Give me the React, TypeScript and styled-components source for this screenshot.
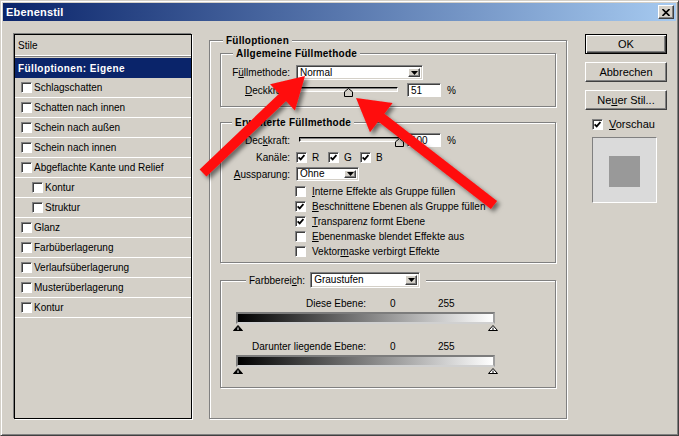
import React from 'react';
import styled, { createGlobalStyle, css } from 'styled-components';

const FACE = '#d4d0c8';

const GlobalStyle = createGlobalStyle`
  html, body {
    margin: 0;
    padding: 0;
    background: ${FACE};
  }
  body {
    font-family: 'Liberation Sans', Arial, sans-serif;
    font-size: 10px;
    color: #000;
  }
  * {
    box-sizing: border-box;
  }
`;

const Window = styled.div`
  position: relative;
  width: 679px;
  height: 436px;
  background: ${FACE};
  border: 1px solid;
  border-color: ${FACE} #404040 #404040 ${FACE};
  box-shadow: inset 1px 1px 0 #fff, inset -1px -1px 0 #808080;
  padding: 2px;
  display: flex;
  flex-direction: column;
  overflow: hidden;
`;

const TitleBar = styled.div`
  height: 18px;
  flex: none;
  background: linear-gradient(to right, #0a246a, #a6caf0);
  display: flex;
  align-items: center;
  justify-content: space-between;
  padding: 0 2px 0 3px;
  color: #fff;
  font-weight: bold;
  font-size: 11px;
  letter-spacing: 0.2px;
`;

const CloseButton = styled.span`
  width: 16px;
  height: 14px;
  background: ${FACE};
  border: 1px solid;
  border-color: #fff #404040 #404040 #fff;
  box-shadow: inset -1px -1px 0 #808080;
  display: flex;
  align-items: center;
  justify-content: center;
`;

const Body = styled.div`
  flex: 1;
  display: flex;
  gap: 17px;
  padding: 13px 0 14px 11px;
`;

/* ---------- left list ---------- */

const StylePanel = styled.div`
  width: 178px;
  flex: none;
  border: 1px solid #000;
  box-shadow: -1px -1px 0 #808080, 1px 1px 0 #fff;
  display: flex;
  flex-direction: column;
`;

const PanelHeader = styled.div`
  height: 21px;
  flex: none;
  display: flex;
  align-items: center;
  padding-left: 3px;
  border-bottom: 1px solid #fff;
  box-shadow: 0 1px 0 #808080;
  margin-bottom: 2px;
`;

const SelectedRow = styled.div`
  height: 20px;
  flex: none;
  display: flex;
  align-items: center;
  padding-left: 3px;
  background: #0a246a;
  color: #fff;
  font-weight: bold;
  letter-spacing: 0.4px;
`;

const StyleRow = styled.div<{ $indent?: boolean }>`
  height: 20px;
  flex: none;
  display: flex;
  align-items: center;
  gap: 2px;
  padding-left: ${({ $indent }) => ($indent ? 17 : 6)}px;
  border-bottom: 1px solid #fff;
`;

/* ---------- shared controls ---------- */

const Box = styled.span`
  width: 11px;
  height: 11px;
  flex: none;
  background: #fff;
  border: 1px solid;
  border-color: #808080 #fff #fff #808080;
  box-shadow: inset 1px 1px 0 #404040;
  display: inline-flex;
  align-items: center;
  justify-content: center;
`;

const Check = ({ checked }: { checked?: boolean }) => (
  <Box>
    {checked && (
      <svg width="7" height="7" viewBox="0 0 7 7">
        <path d="M0.6 3.3 L2.7 5.4 L6.4 1.1" stroke="#000" strokeWidth="1.7" fill="none" />
      </svg>
    )}
  </Box>
);

const SelectBox = styled.div<{ $w: number; $h?: number }>`
  width: ${({ $w }) => $w}px;
  height: ${({ $h }) => $h ?? 15}px;
  flex: none;
  background: #fff;
  border: 1px solid;
  border-color: #808080 #fff #fff #808080;
  box-shadow: inset 1px 1px 0 #404040, inset -1px -1px 0 ${FACE};
  display: flex;
  align-items: center;
  padding: 2px 2px 2px 3px;
  font-weight: normal;
  letter-spacing: 0;
`;

const SelectText = styled.span`
  flex: 1;
  line-height: 1;
`;

const DropButton = styled.span`
  width: 12px;
  height: 100%;
  background: ${FACE};
  border: 1px solid;
  border-color: #fff #404040 #404040 #fff;
  box-shadow: inset -1px -1px 0 #808080;
  display: flex;
  align-items: center;
  justify-content: center;
`;

const Select = ({ value, width, height }: { value: string; width: number; height?: number }) => (
  <SelectBox $w={width} $h={height}>
    <SelectText>{value}</SelectText>
    <DropButton>
      <svg width="7" height="4" viewBox="0 0 7 4">
        <polygon points="0,0 7,0 3.5,4" fill="#000" />
      </svg>
    </DropButton>
  </SelectBox>
);

const SliderWrap = styled.div<{ $w: number; $offset?: number }>`
  position: relative;
  width: ${({ $w }) => $w}px;
  height: 14px;
  margin-left: ${({ $offset }) => $offset ?? 0}px;
  flex: none;
`;

const Track = styled.div`
  margin-top: 4px;
  height: 5px;
  border: 1px solid;
  border-color: #000 #fff #fff #000;
  box-shadow: inset 1px 1px 0 #808080;
  background: #e6e3dd;
`;

const Thumb = styled.svg`
  position: absolute;
  top: 5px;
`;

const Slider = ({ width, value, offset }: { width: number; value: number; offset?: number }) => (
  <SliderWrap $w={width} $offset={offset}>
    <Track />
    <Thumb width="9" height="9" viewBox="0 0 9 9" style={{ left: (width - 2) * value - 3.5 }}>
      <polygon points="0.5,8.5 0.5,3.8 4.5,0.5 8.5,3.8 8.5,8.5" fill={FACE} stroke="#000" />
    </Thumb>
  </SliderWrap>
);

const NumberBox = styled.div`
  width: 34px;
  height: 14px;
  flex: none;
  margin-left: 9px;
  background: #fff;
  border: 1px solid;
  border-color: #808080 #fff #fff #808080;
  box-shadow: inset 1px 1px 0 #404040;
  padding-left: 3px;
  display: flex;
  align-items: center;
`;

const Unit = styled.span`
  margin-left: 6px;
`;

/* ---------- group boxes ---------- */

const etched = css`
  border: 1px solid #808080;
  box-shadow: 1px 1px 0 #fff, inset 1px 1px 0 #fff;
`;

const OuterGroup = styled.fieldset`
  ${etched};
  margin: 0;
  padding: 0 10px;
  width: 358px;
  flex: none;
  min-width: 0;
`;

const InnerGroup = styled.fieldset<{ $gap?: number; $pt: number; $pb: number }>`
  ${etched};
  margin: ${({ $gap }) => $gap ?? 0}px 0 0 0;
  padding: ${({ $pt }) => $pt}px 0 ${({ $pb }) => $pb}px 0;
  min-width: 0;
`;

const Legend = styled.legend<{ $left: number }>`
  margin-left: ${({ $left }) => $left}px;
  padding: 0 3px;
  background: ${FACE};
  font-weight: bold;
  line-height: 13px;
  letter-spacing: 0.25px;
`;

const RangeLegend = styled.legend`
  margin-left: 25px;
  padding: 0 6px 0 3px;
  background: ${FACE};
  display: flex;
  align-items: center;
  gap: 5px;
  height: 16px;
`;

const FieldRow = styled.div<{ $h?: number; $gap?: number }>`
  display: grid;
  grid-template-columns: 69px 1fr;
  column-gap: 6px;
  align-items: center;
  height: ${({ $h }) => $h ?? 14}px;
  margin-top: ${({ $gap }) => $gap ?? 0}px;
`;

const Label = styled.span`
  text-align: right;
  white-space: nowrap;
`;

const Controls = styled.div`
  display: flex;
  align-items: center;
`;

const Channel = styled.span`
  width: 32px;
  display: flex;
  align-items: center;
  gap: 5px;
`;

const CheckList = styled.div`
  margin-top: 3px;
  padding-left: 74px;
`;

const CheckRow = styled.div`
  height: 15px;
  display: flex;
  align-items: center;
  gap: 6px;
  white-space: nowrap;
`;

const RangeBlock = styled.div`
  padding-left: 15px;
`;

const RangeLabels = styled.div<{ $gap: number }>`
  display: grid;
  grid-template-columns: 154px 48px 1fr;
  height: 12px;
  align-items: center;
  margin-top: ${({ $gap }) => $gap}px;
`;

const RangeName = styled.span`
  text-align: right;
  padding-right: 24px;
  white-space: nowrap;
`;

const GradientBar = styled.div`
  width: 259px;
  height: 12px;
  margin-top: 3px;
  background: linear-gradient(to right, #000, #fff);
  border: 2px solid;
  border-color: #7c7c7c #a0a0a0 #d0d0d0 #7c7c7c;
`;

const ThumbRow = styled.div`
  width: 265px;
  height: 6px;
  margin: 1px 0 0 -3px;
  display: flex;
  justify-content: space-between;
`;

const RangeThumb = ({ dark }: { dark?: boolean }) => (
  <svg width="10" height="6" viewBox="0 0 10 6">
    <polygon points="5,0.5 9.5,5.5 0.5,5.5" fill={dark ? '#000' : '#fff'} stroke="#000" />
    <line x1="5" y1="2.5" x2="5" y2="5" stroke={dark ? '#fff' : '#000'} />
  </svg>
);

/* ---------- right column ---------- */

const ButtonColumn = styled.div`
  width: 82px;
  flex: none;
  align-self: flex-start;
  margin-left: 1px;
  display: flex;
  flex-direction: column;
  gap: 8px;
`;

const Button = styled.div<{ $default?: boolean }>`
  height: 20px;
  display: flex;
  align-items: center;
  justify-content: center;
  font-size: 11px;
  background: ${FACE};
  border: 1px solid;
  border-color: #fff #404040 #404040 #fff;
  box-shadow: inset -1px -1px 0 #808080;
  ${({ $default }) =>
    $default &&
    css`
      border-color: #000;
      box-shadow: inset 1px 1px 0 #fff, inset -1px -1px 0 #404040, inset -2px -2px 0 #808080;
    `}
`;

const PreviewToggle = styled.div`
  height: 12px;
  padding-left: 7px;
  display: flex;
  align-items: center;
  gap: 6px;
  font-size: 11px;
`;

const Preview = styled.div`
  width: 65px;
  height: 66px;
  margin: -1px 0 0 7px;
  background: #dadada;
  border: 1px solid;
  border-color: #808080 #fff #fff #808080;
  display: flex;
  align-items: center;
  justify-content: center;
`;

const PreviewSwatch = styled.div`
  width: 31px;
  height: 31px;
  margin-top: 3px;
  background: #999999;
`;

/* ---------- red annotation arrows ---------- */

const Overlay = styled.svg`
  position: absolute;
  top: -1px;
  left: -1px;
  pointer-events: none;
`;

type Pt = [number, number];

const arrowPoints = (tail: Pt, tip: Pt, shaft: number, headLen: number, headW: number) => {
  const dx = tip[0] - tail[0];
  const dy = tip[1] - tail[1];
  const len = Math.hypot(dx, dy);
  const ux = dx / len;
  const uy = dy / len;
  const px = -uy;
  const py = ux;
  const bx = tip[0] - ux * headLen;
  const by = tip[1] - uy * headLen;
  const s = shaft / 2;
  const h = headW / 2;
  const pts: Pt[] = [
    [tail[0] + px * s, tail[1] + py * s],
    [bx + px * s, by + py * s],
    [bx + px * h, by + py * h],
    tip,
    [bx - px * h, by - py * h],
    [bx - px * s, by - py * s],
    [tail[0] - px * s, tail[1] - py * s],
  ];
  return pts.map(p => `${p[0].toFixed(1)},${p[1].toFixed(1)}`).join(' ');
};

const arrows = [
  { tail: [203, 173] as Pt, tip: [305, 76] as Pt, shaft: 10, headLen: 31, headW: 36 },
  { tail: [494, 205] as Pt, tip: [356, 98] as Pt, shaft: 10, headLen: 32, headW: 37 },
];

const styleItems: { name: string; indent?: boolean }[] = [
  { name: 'Schlagschatten' },
  { name: 'Schatten nach innen' },
  { name: 'Schein nach außen' },
  { name: 'Schein nach innen' },
  { name: 'Abgeflachte Kante und Relief' },
  { name: 'Kontur', indent: true },
  { name: 'Struktur', indent: true },
  { name: 'Glanz' },
  { name: 'Farbüberlagerung' },
  { name: 'Verlaufsüberlagerung' },
  { name: 'Musterüberlagerung' },
  { name: 'Kontur' },
];

const App: React.FC = () => (
  <>
    <GlobalStyle />
    <Window>
      <TitleBar>
        <span>Ebenenstil</span>
        <CloseButton>
          <svg width="8" height="7" viewBox="0 0 8 7">
            <path d="M0.5 0 L7.5 7 M7.5 0 L0.5 7" stroke="#000" strokeWidth="1.6" />
          </svg>
        </CloseButton>
      </TitleBar>

      <Body>
        <StylePanel>
          <PanelHeader>Stile</PanelHeader>
          <SelectedRow>Fülloptionen: Eigene</SelectedRow>
          {styleItems.map((item, i) => (
            <StyleRow key={i} $indent={item.indent}>
              <Check />
              <span>{item.name}</span>
            </StyleRow>
          ))}
        </StylePanel>

        <OuterGroup>
          <Legend $left={3}>Fülloptionen</Legend>

          <InnerGroup $pt={5} $pb={9}>
            <Legend $left={12}>Allgemeine Füllmethode</Legend>
            <FieldRow $h={15}>
              <Label>
                F<u>ü</u>llmethode:
              </Label>
              <Controls>
                <Select value="Normal" width={127} />
              </Controls>
            </FieldRow>
            <FieldRow $gap={3}>
              <Label>
                <u>D</u>eckkraft:
              </Label>
              <Controls>
                <Slider width={100} value={0.51} offset={2} />
                <NumberBox>51</NumberBox>
                <Unit>%</Unit>
              </Controls>
            </FieldRow>
          </InnerGroup>

          <InnerGroup $gap={9} $pt={4} $pb={3}>
            <Legend $left={11}>Erweiterte Füllmethode</Legend>
            <FieldRow>
              <Label>
                Dec<u>k</u>kraft:
              </Label>
              <Controls>
                <Slider width={101} value={1} offset={3} />
                <NumberBox style={{ marginLeft: 7 }}>100</NumberBox>
                <Unit>%</Unit>
              </Controls>
            </FieldRow>
            <FieldRow $gap={3}>
              <Label>Kanäle:</Label>
              <Controls>
                {['R', 'G', 'B'].map(c => (
                  <Channel key={c}>
                    <Check checked />
                    {c}
                  </Channel>
                ))}
              </Controls>
            </FieldRow>
            <FieldRow $gap={3}>
              <Label>
                <u>A</u>ussparung:
              </Label>
              <Controls>
                <Select value="Ohne" width={63} height={14} />
              </Controls>
            </FieldRow>
            <CheckList>
              <CheckRow>
                <Check />
                <span>
                  <u>I</u>nterne Effekte als Gruppe füllen
                </span>
              </CheckRow>
              <CheckRow>
                <Check checked />
                <span>
                  <u>B</u>eschnittene Ebenen als Gruppe füllen
                </span>
              </CheckRow>
              <CheckRow>
                <Check checked />
                <span>
                  <u>T</u>ransparenz formt Ebene
                </span>
              </CheckRow>
              <CheckRow>
                <Check />
                <span>
                  <u>E</u>benenmaske blendet Effekte aus
                </span>
              </CheckRow>
              <CheckRow>
                <Check />
                <span>
                  Vektor<u>m</u>aske verbirgt Effekte
                </span>
              </CheckRow>
            </CheckList>
          </InnerGroup>

          <InnerGroup $gap={9} $pt={0} $pb={13}>
            <RangeLegend>
              <span>
                Farbberei<u>c</u>h:
              </span>
              <Select value="Graustufen" width={110} height={16} />
            </RangeLegend>
            <RangeBlock>
              <RangeLabels $gap={9}>
                <RangeName>Diese Ebene:</RangeName>
                <span>0</span>
                <span>255</span>
              </RangeLabels>
              <GradientBar />
              <ThumbRow>
                <RangeThumb dark />
                <RangeThumb />
              </ThumbRow>
              <RangeLabels $gap={9}>
                <RangeName>Darunter liegende Ebene:</RangeName>
                <span>0</span>
                <span>255</span>
              </RangeLabels>
              <GradientBar />
              <ThumbRow>
                <RangeThumb dark />
                <RangeThumb />
              </ThumbRow>
            </RangeBlock>
          </InnerGroup>
        </OuterGroup>

        <ButtonColumn>
          <Button $default>OK</Button>
          <Button>Abbrechen</Button>
          <Button>
            Ne<u>u</u>er Stil...
          </Button>
          <PreviewToggle>
            <Check checked />
            <span>
              <u>V</u>orschau
            </span>
          </PreviewToggle>
          <Preview>
            <PreviewSwatch />
          </Preview>
        </ButtonColumn>
      </Body>

      <Overlay width="679" height="436" viewBox="0 0 679 436">
        <defs>
          <filter id="arrowShadow" x="-20%" y="-20%" width="140%" height="140%">
            <feDropShadow dx="3" dy="3" stdDeviation="2" floodColor="#000" floodOpacity="0.5" />
          </filter>
        </defs>
        {arrows.map((a, i) => (
          <polygon
            key={i}
            points={arrowPoints(a.tail, a.tip, a.shaft, a.headLen, a.headW)}
            fill="#ff0d0d"
            filter="url(#arrowShadow)"
          />
        ))}
      </Overlay>
    </Window>
  </>
);

export default App;
